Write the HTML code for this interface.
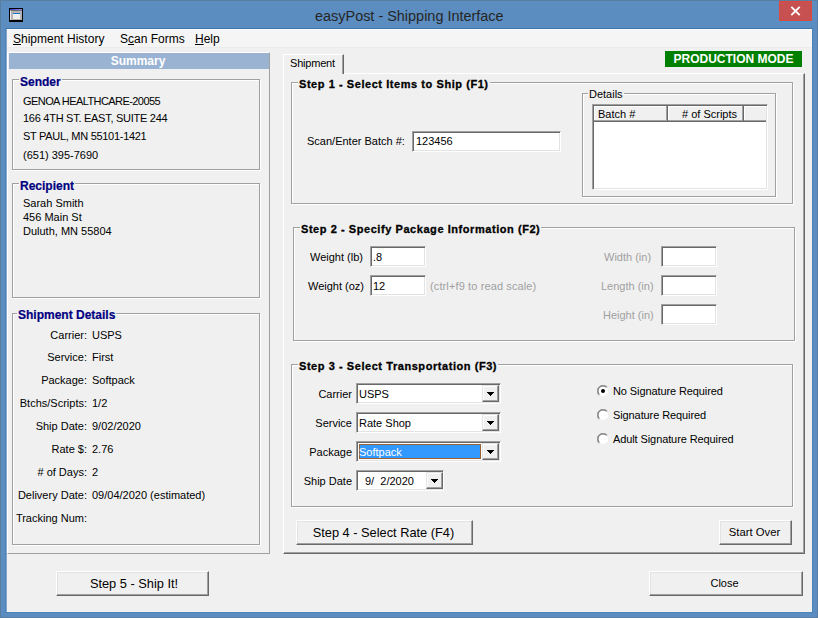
<!DOCTYPE html>
<html><head><meta charset="utf-8">
<style>
*{margin:0;padding:0;box-sizing:border-box}
html,body{width:818px;height:618px;overflow:hidden}
body{position:relative;background:#5B8DC1;font-family:"Liberation Sans",sans-serif;font-size:11px;color:#000}
.a{position:absolute}
.t{position:absolute;white-space:nowrap;line-height:13px}
.gb{position:absolute;border:1px solid #A0A0A0;box-shadow:inset 1px 1px 0 #fff,1px 1px 0 #fff}
.gt{position:absolute;background:#F0F0F0;white-space:nowrap;line-height:13px;padding:0 1px}
.tb{position:absolute;background:#fff;border:1px solid;border-color:#A0A0A0 #fff #fff #A0A0A0;box-shadow:inset 1px 1px 0 #696969,inset -1px -1px 0 #E3E3E3}
.btn{position:absolute;background:#F0F0F0;border:1px solid;border-color:#fff #696969 #696969 #fff;box-shadow:inset -1px -1px 0 #A0A0A0,inset 1px 1px 0 #E3E3E3;text-align:center;white-space:nowrap}
.arr{position:absolute;background:#F0F0F0;border:1px solid;border-color:#E3E3E3 #696969 #696969 #E3E3E3;box-shadow:inset -1px -1px 0 #A0A0A0,inset 1px 1px 0 #fff}
.arr svg{position:absolute;left:4px;top:6px}
.lbl{text-align:right}
.grey{color:#A0A0A0}
.st{font-weight:bold;font-size:11px;letter-spacing:0.56px;-webkit-text-stroke:0.3px #000}
.navy{color:#000080;font-weight:bold;font-size:12px;-webkit-text-stroke:0.2px #000080}
.hd{position:absolute;top:106px;height:16px;background:#F0F0F0;border-right:1px solid #696969;border-bottom:1px solid #696969;box-shadow:inset -1px -1px 0 #A0A0A0,inset 1px 1px 0 #fff}
.rad{position:absolute;left:597px}
.bt{font-size:12.8px;line-height:23px}
</style></head><body>
<!-- frame -->
<div class="a" style="left:0;top:0;width:818px;height:618px;border:1px solid #5A7DA2"></div>
<!-- window icon -->
<div class="a" style="left:9px;top:8px;width:14px;height:14px;background:#000"></div>
<div class="a" style="left:10px;top:9px;width:12px;height:1px;background:linear-gradient(90deg,#3838B8,#9090F0)"></div>
<div class="a" style="left:10px;top:10px;width:12px;height:10px;background:#B4B4B4;border-left:1px solid #E8E8E8;border-top:1px solid #707070"></div>
<div class="a" style="left:13px;top:13px;width:7px;height:1px;background:#1878D0"></div>
<div class="a" style="left:13px;top:14px;width:7px;height:5px;background:#EEEEEE"></div>
<div class="t" style="left:315px;top:6.5px;font-size:14.45px;line-height:18px;color:#262626">easyPost - Shipping Interface</div>
<!-- close -->
<div class="a" style="left:779px;top:1px;width:33px;height:20px;background:#C75050;border:1px solid #DC4A3E"></div>
<div class="a" style="left:779px;top:21px;width:33px;height:1px;background:#4A92CC"></div>
<svg class="a" style="left:779px;top:1px" width="33" height="20"><path d="M12.3 5.8 L20.7 14.2 M20.7 5.8 L12.3 14.2" stroke="#fff" stroke-width="1.9"/></svg>
<!-- client -->
<div class="a" style="left:5px;top:28px;width:808px;height:585px;background:#F0F0F0;border:1px solid #4A84BA;border-top-color:#3F76AE;box-shadow:inset 1px 0 0 #86A8CA"></div>
<!-- menu -->
<div class="a" style="left:7px;top:29px;width:805px;height:19px;background:#F5F5F5;border-top:1px solid #fff;border-bottom:1px solid #EBEBEB"></div>
<div class="t" style="left:13px;top:32px;font-size:12px;line-height:14px"><u>S</u>hipment History</div>
<div class="t" style="left:120px;top:32px;font-size:12px;line-height:14px">S<u>c</u>an Forms</div>
<div class="t" style="left:195px;top:32px;font-size:12px;line-height:14px"><u>H</u>elp</div>

<!-- left panel -->
<div class="a" style="left:7px;top:52px;width:263px;height:502px;border:1px solid;border-color:#fff #A0A0A0 #A0A0A0 #fff"></div>
<div class="a" style="left:9px;top:53px;width:260px;height:16px;background:#9AB3D3"></div>
<div class="t" style="left:8px;top:54px;width:260px;text-align:center;color:#fff;font-weight:bold;font-size:12px;line-height:14px">Summary</div>

<div class="gb" style="left:12px;top:79px;width:248px;height:91px"></div>
<div class="gt navy" style="left:19px;top:76px">Sender</div>
<div class="t" style="left:23px;top:95px;letter-spacing:-0.57px">GENOA HEALTHCARE-20055</div>
<div class="t" style="left:23px;top:112px;letter-spacing:-0.27px">166 4TH ST. EAST, SUITE 244</div>
<div class="t" style="left:23px;top:130px;letter-spacing:-0.29px">ST PAUL, MN 55101-1421</div>
<div class="t" style="left:23px;top:149px">(651) 395-7690</div>

<div class="gb" style="left:12px;top:183px;width:248px;height:115px"></div>
<div class="gt navy" style="left:19px;top:180px">Recipient</div>
<div class="t" style="left:23px;top:197px">Sarah Smith</div>
<div class="t" style="left:23px;top:211px">456 Main St</div>
<div class="t" style="left:23px;top:225px">Duluth, MN 55804</div>

<div class="gb" style="left:12px;top:313px;width:248px;height:232px"></div>
<div class="gt navy" style="left:17px;top:309px">Shipment Details</div>
<div class="t lbl" style="left:12px;width:75px;top:329px">Carrier:</div><div class="t" style="left:92px;top:329px">USPS</div>
<div class="t lbl" style="left:12px;width:75px;top:351px">Service:</div><div class="t" style="left:92px;top:351px">First</div>
<div class="t lbl" style="left:12px;width:75px;top:374px">Package:</div><div class="t" style="left:92px;top:374px">Softpack</div>
<div class="t lbl" style="left:12px;width:75px;top:397px">Btchs/Scripts:</div><div class="t" style="left:92px;top:397px">1/2</div>
<div class="t lbl" style="left:12px;width:75px;top:420px">Ship Date:</div><div class="t" style="left:92px;top:420px">9/02/2020</div>
<div class="t lbl" style="left:12px;width:75px;top:443px">Rate $:</div><div class="t" style="left:92px;top:443px">2.76</div>
<div class="t lbl" style="left:12px;width:75px;top:466px"># of Days:</div><div class="t" style="left:92px;top:466px">2</div>
<div class="t lbl" style="left:12px;width:75px;top:489px">Delivery Date:</div><div class="t" style="left:92px;top:489px">09/04/2020 (estimated)</div>
<div class="t lbl" style="left:12px;width:75px;top:512px">Tracking Num:</div>

<!-- production mode -->
<div class="a" style="left:665px;top:51px;width:137px;height:16px;background:#008000"></div>
<div class="t" style="left:664px;top:52px;width:139px;text-align:center;color:#fff;font-weight:bold;font-size:12px;line-height:14px">PRODUCTION MODE</div>

<!-- tab -->
<div class="a" style="left:283px;top:73px;width:522px;height:481px;border:1px solid;border-color:#fff #696969 #696969 #fff;box-shadow:inset -1px -1px 0 #A0A0A0"></div>
<div class="a" style="left:283px;top:54px;width:61px;height:20px;background:#F0F0F0;border-left:1px solid #fff;border-top:1px solid #fff;border-right:1px solid #696969;box-shadow:inset -1px 0 0 #A0A0A0"></div>
<div class="t" style="left:290px;top:57px;letter-spacing:-0.2px">Shipment</div>

<!-- step1 -->
<div class="gb" style="left:291px;top:82px;width:502px;height:122px"></div>
<div class="gt st" style="left:298px;top:78px">Step 1 - Select Items to Ship (F1)</div>
<div class="t" style="left:307px;top:135px">Scan/Enter Batch #:</div>
<div class="tb" style="left:412px;top:131px;width:149px;height:21px"></div>
<div class="t" style="left:416px;top:135px">123456</div>

<div class="gb" style="left:582px;top:93px;width:194px;height:104px"></div>
<div class="gt" style="left:588px;top:88px">Details</div>
<div class="tb" style="left:592px;top:104px;width:176px;height:86px"></div>
<div class="hd" style="left:594px;width:74px"></div>
<div class="hd" style="left:668px;width:76px"></div>
<div class="hd" style="left:744px;width:22px;border-right:none;box-shadow:inset 0 -1px 0 #A0A0A0,inset 1px 1px 0 #fff"></div>
<div class="t" style="left:598px;top:108px">Batch #</div>
<div class="t" style="left:682px;top:108px"># of Scripts</div>

<!-- step2 -->
<div class="gb" style="left:293px;top:227px;width:502px;height:114px"></div>
<div class="gt st" style="left:300px;top:223px">Step 2 - Specify Package Information (F2)</div>
<div class="t" style="left:310px;top:251px">Weight (lb)</div>
<div class="tb" style="left:370px;top:246px;width:56px;height:21px"></div>
<div class="t" style="left:373px;top:251px">.8</div>
<div class="t" style="left:308px;top:280px">Weight (oz)</div>
<div class="tb" style="left:370px;top:275px;width:56px;height:21px"></div>
<div class="t" style="left:373px;top:280px">12</div>
<div class="t grey" style="left:430px;top:280px;letter-spacing:0.12px">(ctrl+f9 to read scale)</div>
<div class="t grey" style="left:604px;top:251px">Width (in)</div>
<div class="tb" style="left:661px;top:246px;width:56px;height:21px"></div>
<div class="t grey" style="left:601px;top:280px">Length (in)</div>
<div class="tb" style="left:661px;top:275px;width:56px;height:21px"></div>
<div class="t grey" style="left:603px;top:309px">Height (in)</div>
<div class="tb" style="left:661px;top:304px;width:56px;height:21px"></div>

<!-- step3 -->
<div class="gb" style="left:291px;top:364px;width:502px;height:143px"></div>
<div class="gt st" style="left:298px;top:360px">Step 3 - Select Transportation (F3)</div>
<div class="t lbl" style="left:290px;width:62px;top:388px">Carrier</div>
<div class="tb" style="left:356px;top:383px;width:145px;height:21px"></div>
<div class="arr" style="left:482px;top:385px;width:17px;height:17px"><svg width="7" height="4"><path d="M0 0h7v1h-1v1h-1v1h-1v1h-1v-1h-1v-1h-1v-1h-1z" fill="#000"/></svg></div>
<div class="t" style="left:359px;top:388px">USPS</div>
<div class="t lbl" style="left:290px;width:62px;top:417px">Service</div>
<div class="tb" style="left:356px;top:412px;width:145px;height:21px"></div>
<div class="arr" style="left:482px;top:414px;width:17px;height:17px"><svg width="7" height="4"><path d="M0 0h7v1h-1v1h-1v1h-1v1h-1v-1h-1v-1h-1v-1h-1z" fill="#000"/></svg></div>
<div class="t" style="left:359px;top:417px">Rate Shop</div>
<div class="t lbl" style="left:290px;width:62px;top:446px">Package</div>
<div class="tb" style="left:356px;top:441px;width:145px;height:21px"></div>
<div class="arr" style="left:482px;top:443px;width:17px;height:17px"><svg width="7" height="4"><path d="M0 0h7v1h-1v1h-1v1h-1v1h-1v-1h-1v-1h-1v-1h-1z" fill="#000"/></svg></div>
<div class="a" style="left:359px;top:444px;width:122px;height:15px;background:#3399FF;outline:1px solid #9A6030;outline-offset:-1px"></div>
<div class="t" style="left:359px;top:446px;color:#fff">Softpack</div>
<div class="t lbl" style="left:290px;width:62px;top:475px">Ship Date</div>
<div class="tb" style="left:356px;top:470px;width:88px;height:21px"></div>
<div class="arr" style="left:426px;top:472px;width:17px;height:17px"><svg width="7" height="4"><path d="M0 0h7v1h-1v1h-1v1h-1v1h-1v-1h-1v-1h-1v-1h-1z" fill="#000"/></svg></div>
<div class="t" style="left:365px;top:475px">9/&nbsp; 2/2020</div>

<!-- radios -->
<svg class="rad" style="top:385px" width="12" height="12"><circle cx="6" cy="6" r="5" fill="#fff"/><path d="M10.24 1.76A6 6 0 0 0 1.76 10.24" stroke="#A0A0A0" fill="none"/><path d="M9.54 2.46A5 5 0 0 0 2.46 9.54" stroke="#696969" fill="none"/><circle cx="6" cy="6" r="2" fill="#000"/></svg>
<div class="t" style="left:613px;top:385px;letter-spacing:-0.1px">No Signature Required</div>
<svg class="rad" style="top:409px" width="12" height="12"><circle cx="6" cy="6" r="5" fill="#fff"/><path d="M10.24 1.76A6 6 0 0 0 1.76 10.24" stroke="#A0A0A0" fill="none"/><path d="M9.54 2.46A5 5 0 0 0 2.46 9.54" stroke="#696969" fill="none"/></svg>
<div class="t" style="left:613px;top:409px;letter-spacing:-0.1px">Signature Required</div>
<svg class="rad" style="top:433px" width="12" height="12"><circle cx="6" cy="6" r="5" fill="#fff"/><path d="M10.24 1.76A6 6 0 0 0 1.76 10.24" stroke="#A0A0A0" fill="none"/><path d="M9.54 2.46A5 5 0 0 0 2.46 9.54" stroke="#696969" fill="none"/></svg>
<div class="t" style="left:613px;top:433px;letter-spacing:-0.1px">Adult Signature Required</div>

<!-- buttons -->
<div class="btn bt" style="left:296px;top:520px;width:177px;height:25px;padding-right:2px">Step 4 - Select Rate (F4)</div>
<div class="btn" style="left:719px;top:520px;width:73px;height:25px;line-height:23px;font-size:11.3px;padding-right:2px">Start Over</div>
<div class="btn bt" style="left:56px;top:571px;width:153px;height:25px;padding-left:3px">Step 5 - Ship It!</div>
<div class="btn" style="left:649px;top:571px;width:154px;height:25px;line-height:23px;padding-right:3px">Close</div>
</body></html>
